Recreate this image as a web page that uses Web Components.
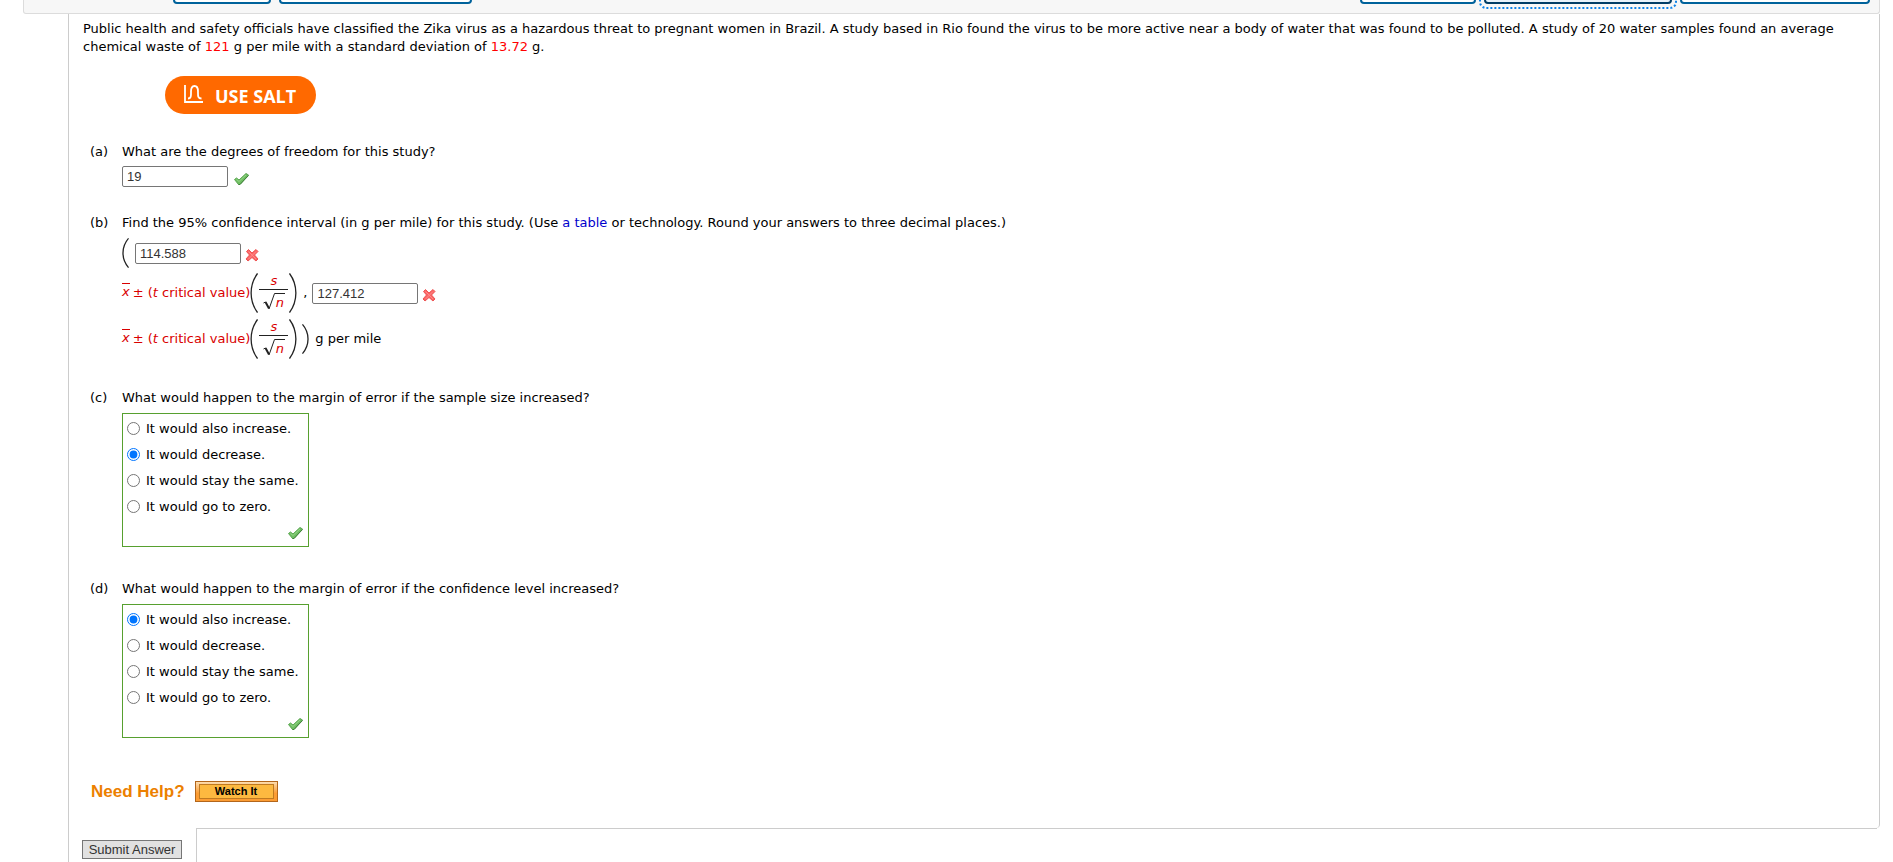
<!DOCTYPE html>
<html lang="en">
<head>
<meta charset="utf-8">
<title>Assignment question</title>
<style>
body { margin: 0; background: #fff; color: #000; font: 13px/18px Verdana, "DejaVu Sans", sans-serif; }
</style>
</head>
<body>
<question-page></question-page>
<script>
const define = (name, html, setup) => {
  const t = document.createElement('template');
  t.innerHTML = html;
  customElements.define(name, class extends HTMLElement {
    constructor() {
      super();
      this.attachShadow({ mode: 'open' }).append(t.content.cloneNode(true));
    }
    connectedCallback() { if (setup) setup(this, this.shadowRoot); }
  });
};

define('result-mark', `<style>
  :host { display: block; flex: none; width: 15px; height: 14px; }
  svg { display: none; width: 15px; height: 14px; }
  :host([kind="right"]) .right, :host([kind="wrong"]) .wrong { display: block; }
</style>
<svg class="right" viewBox="0 0 15 14" role="img" aria-label="correct"><path d="M.5 7.500 2.500 6l2.500 2 7-6.500 2.500 1.500L6 12.500H4.500z" fill="#6fbe62" stroke="#5aa651" stroke-linejoin="round"/><path d="M4.500 12.500H6L14.500 3.500" fill="none" stroke="#3f7f3a"/><path d="M2.500 7.500 5 9.500 12 3" fill="none" stroke="#93d587"/></svg>
<svg class="wrong" viewBox="0 0 15 14" role="img" aria-label="incorrect"><path d="M3.500 1.500 7 5l4-3.500 2 2L9.500 7l3.500 4-2 2-4-3.500L3 13l-2-2 3.500-4L1.500 3.500z" fill="#fb6464" stroke="#ee5454" stroke-linejoin="round"/><path d="m3.500 3.500 7.500 7.500M11 3.500 3.500 11" stroke="#ff8a8a" fill="none"/></svg>`);

define('answer-box', `<style>
  :host { display: block; flex: none; }
  input { display: block; box-sizing: border-box; width: 106px; height: 21px; margin: 0; padding: 0 4px; border: 1px solid #767676; border-radius: 2px; background: #fff; color: #333; font: 13px "Liberation Sans", Arial, sans-serif; }
</style><input type="text">`, (h, r) => {
  const i = r.querySelector('input');
  i.value = h.getAttribute('value');
  i.setAttribute('aria-label', h.getAttribute('label'));
});

define('tool-button', `<style>
  :host { display: block; flex: none; position: relative; }
  button { display: block; box-sizing: border-box; width: 100%; height: 32px; border: 2px solid #00629b; border-radius: 4px; background: #fff; }
  :host([focused]) button { border-color: #003d66; background: #e8f2fa; }
  :host([focused])::after { content: ""; position: absolute; inset: -5px; border: 2px dotted #0f83e6; border-radius: 7px; pointer-events: none; }
</style><button type="button" aria-label="Question tool"></button>`);

define('tool-bar', `<style>
  :host { display: flex; gap: 8px; height: 32px; margin: -28px 13px 0 23px; padding: 0 9px 9px 149px; border: 1px solid #dcdcdc; border-top: 0; border-radius: 0 0 3px 3px; background: #f7f7f7; }
  .gap { flex: 1; }
  .w1 { width: 98px; } .w2 { width: 193px; } .w3 { width: 116px; } .w4 { width: 188px; } .w5 { width: 190px; }
</style>
<tool-button class="w1"></tool-button><tool-button class="w2"></tool-button><span class="gap"></span>
<tool-button class="w3"></tool-button><tool-button class="w4" focused></tool-button><tool-button class="w5"></tool-button>`);

define('salt-button', `<style>
  :host { display: block; }
  button { display: flex; align-items: center; gap: 11px; width: 151px; height: 38px; padding: 1px 0 0 18px; border: 0; border-radius: 19px; background: #ff6900; color: #fff; font: bold 18px/24px "Open Sans", sans-serif; white-space: nowrap; }
  svg { flex: none; margin-bottom: 3px; }
</style>
<button type="button"><svg width="21" height="20" viewBox="0 0 21 20" fill="none" stroke="#fff" stroke-width="1.800"><path d="M2 1v17h18"/><path d="M5 14.500c3.500 0 3-3 3-7 0-3.500 1-5.500 3.500-5.500S15 4 15 7.500c0 4-.5 7 3.500 7"/></svg><span>USE SALT</span></button>`);

define('question-part', `<style>
  :host { display: grid; grid-template-columns: 32px 1fr; }
  .body { grid-column: 2; display: flex; flex-direction: column; align-items: flex-start; }
</style>
<span class="tag"></span><slot name="ask"></slot><div class="body"><slot></slot></div>`, (h, r) => {
  r.querySelector('.tag').textContent = '(' + h.getAttribute('letter') + ')';
});

define('big-paren', `<style>
  :host { display: block; flex: none; width: 8px; height: 40px; }
  :host([small]) { width: 7px; height: 30px; }
  :host([close]) svg { transform: scaleX(-1); }
  svg { display: block; width: 100%; height: 100%; }
</style>
<svg viewBox="0 0 8 40" preserveAspectRatio="none" fill="none" stroke="#222" stroke-width="1.300"><path d="M7.500.5C-1 12-1 28 7.500 39.500" vector-effect="non-scaling-stroke"/></svg>`);

define('interval-formula', `<style>
  :host { display: flex; align-items: center; color: #d90000; height: 40px; }
  .mean { border-top: 1px solid #d90000; line-height: 15px; margin: 0 3px 4px 0; }
  .frac { display: flex; flex-direction: column; align-items: center; width: 31px; height: 40px; }
  .top { line-height: 16px; }
  .bar { width: 29px; height: 1px; background: #222; }
  .root { display: flex; height: 20px; }
  .root svg { display: block; margin-top: 3px; }
  .root i { line-height: 18px; border-top: 1px solid #222; height: 17px; margin-top: 3px; padding: 0 1px; }
</style>
<i class="mean">x</i><span>± (<i>t</i> critical value)</span>
<big-paren></big-paren>
<span class="frac"><i class="top">s</i><span class="bar"></span><span class="root"><svg width="12" height="17" viewBox="0 0 12 17" fill="none" stroke="#222"><path d="m.5 10 2-1" /><path d="m2.500 9 3.500 6.500" stroke-width="2"/><path d="M6 16 11.500.5H12"/></svg><i>n</i></span></span>
<big-paren close></big-paren>`);

define('choice-list', `<style>
  :host { display: block; margin-top: 6px; }
  fieldset { box-sizing: border-box; width: 187px; margin: 0; padding: 2px 4px 6px; border: 1px solid #57a02f; display: flex; flex-direction: column; }
  label { display: flex; align-items: center; gap: 6px; height: 26px; white-space: nowrap; }
  input { width: 13px; height: 13px; margin: 0 0 2px; flex: none; accent-color: #0075ff; }
  result-mark { align-self: flex-end; margin: 6px 1px 0 0; }
</style><fieldset></fieldset>`, (h, r) => {
  const f = r.querySelector('fieldset');
  f.setAttribute('aria-label', h.getAttribute('label'));
  ['It would also increase.', 'It would decrease.', 'It would stay the same.', 'It would go to zero.'].forEach((s, n) => {
    const l = document.createElement('label');
    const i = document.createElement('input');
    i.type = 'radio'; i.name = 'choice'; i.checked = n === +h.getAttribute('checked');
    const t = document.createElement('span'); t.textContent = s;
    l.append(i, t); f.append(l);
  });
  const m = document.createElement('result-mark');
  m.setAttribute('kind', 'right');
  f.append(m);
});

define('help-row', `<style>
  :host { display: flex; align-items: center; gap: 10px; }
  b { color: #ec8000; font: bold 17px/20px "Liberation Sans", Arial, sans-serif; }
  button { box-sizing: border-box; width: 83px; height: 21px; padding: 2px 3px; border: 1px solid #b3661b; background: linear-gradient(#fddcae, #fb9c33 60%); }
  button span { display: block; border: 1px solid #c07a20; background: #fdb940; color: #000; font: bold 11px/13px "Liberation Sans", Arial, sans-serif; }
</style><b>Need Help?</b><button type="button"><span>Watch It</span></button>`);

define('submit-row', `<style>
  :host { display: grid; grid-template-columns: 128px 1fr; }
  .left { border-left: 1px solid #ccc; padding: 12px 0 3px 13px; }
  .box { border: solid #ccc; border-width: 1px 0 0 1px; margin-right: 3px; }
  button { display: block; box-sizing: border-box; width: 100px; height: 19px; padding: 0; border: 1px solid #767676; background: #e1e1e1; color: #333; font: 13px/17px "Liberation Sans", Arial, sans-serif; white-space: nowrap; }
</style><div class="left"><button type="submit">Submit Answer</button></div><div class="box"></div>`);

define('question-page', `<style>
  :host { display: block; height: 100vh; overflow: hidden; }
  .card { margin: 0 13px 0 68px; }
  .sheet { border: solid #ccc; border-width: 0 1px; border-radius: 0 0 4px 0; padding: 6px 14px 26px; }
  p { margin: 0; }
  .red { color: #f00; }
  salt-button { margin: 20px 0 29px 82px; }
  question-part { margin-left: 7px; }
  .a { margin-bottom: 27px; } .b { margin-bottom: 30px; } .c { margin-bottom: 33px; } .d { margin-bottom: 43px; }
  .row { display: flex; align-items: center; }
  .row result-mark { margin-top: 4px; }
  .first { gap: 6px; margin-top: 5px; }
  .line1 { height: 30px; margin-top: 6px; }
  .line1 answer-box { margin: 0 4px 0 6px; }
  .line2 { height: 40px; margin-top: 5px; }
  .line2 answer-box { margin: 0 4px 0 5px; }
  .comma { margin-left: 6px; }
  .line3 { height: 40px; margin-top: 6px; }
  .line3 > big-paren { margin: 0 6px 0 5px; }
  a { color: #00c; text-decoration: none; }
  help-row { margin-left: 8px; }
</style>
<tool-bar></tool-bar>
<main class="card">
  <div class="sheet">
    <p>Public health and safety officials have classified the Zika virus as a hazardous threat to pregnant women in Brazil. A study based in Rio found the virus to be more active near a body of water that was found to be polluted. A study of 20 water samples found an average chemical waste of <span class="red">121</span> g per mile with a standard deviation of <span class="red">13.72</span> g.</p>
    <salt-button></salt-button>
    <question-part class="a" letter="a"><span slot="ask">What are the degrees of freedom for this study?</span>
      <div class="row first"><answer-box value="19" label="Degrees of freedom"></answer-box><result-mark kind="right"></result-mark></div></question-part>
    <question-part class="b" letter="b"><span slot="ask">Find the 95% confidence interval (in g per mile) for this study. (Use <a href="#table">a table</a> or technology. Round your answers to three decimal places.)</span>
      <div class="row line1"><big-paren small></big-paren><answer-box value="114.588" label="Lower limit"></answer-box><result-mark kind="wrong"></result-mark></div>
      <div class="row line2"><interval-formula></interval-formula><span class="comma">,</span><answer-box value="127.412" label="Upper limit"></answer-box><result-mark kind="wrong"></result-mark></div>
      <div class="row line3"><interval-formula></interval-formula><big-paren small close></big-paren><span>g per mile</span></div></question-part>
    <question-part class="c" letter="c"><span slot="ask">What would happen to the margin of error if the sample size increased?</span>
      <choice-list checked="1" label="Margin of error with a larger sample"></choice-list></question-part>
    <question-part class="d" letter="d"><span slot="ask">What would happen to the margin of error if the confidence level increased?</span>
      <choice-list checked="0" label="Margin of error with a higher confidence level"></choice-list></question-part>
    <help-row></help-row>
  </div>
  <submit-row></submit-row>
</main>`);
</script>
</body>
</html>
